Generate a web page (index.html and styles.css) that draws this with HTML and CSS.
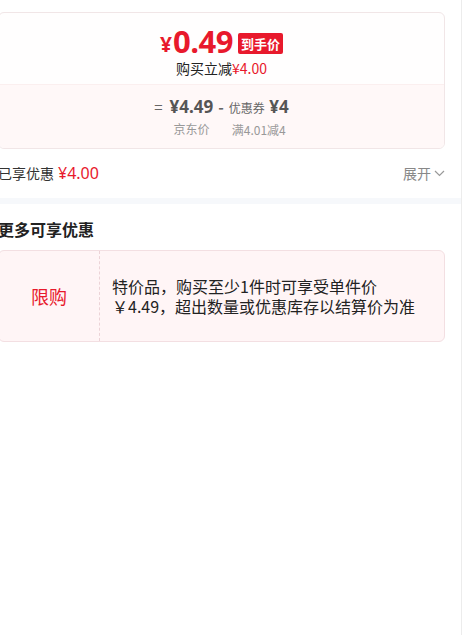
FILE: index.html
```html
<!DOCTYPE html>
<html lang="zh-CN">
<head>
<meta charset="utf-8">
<link rel="stylesheet" href="styles.css">
</head>
<body>
<div class="page">
  <div class="price-card">
    <div class="price-top">
      <div class="price-line">
        <span class="yen">¥</span><span class="amount">0.49</span><span class="badge">到手价</span>
      </div>
      <div class="reduce">购买立减<span class="red">¥4.00</span></div>
    </div>
    <div class="price-bottom">
      <div class="op">=</div>
      <div class="col">
        <div class="val">¥4.49</div>
        <div class="lbl">京东价</div>
      </div>
      <div class="op minus">-</div>
      <div class="col">
        <div class="val"><span class="small">优惠券</span> ¥4</div>
        <div class="lbl">满4.01减4</div>
      </div>
    </div>
  </div>

  <div class="saved-row">
    <div class="saved">已享优惠 <span class="saved-num">¥4.00</span></div>
    <div class="expand">展开
      <svg class="chev" width="11" height="7" viewBox="0 0 11 7"><path d="M1 1 L5.5 5.5 L10 1" fill="none" stroke="#999" stroke-width="1.2"/></svg>
    </div>
  </div>

  <div class="band"></div>

  <div class="more-title">更多可享优惠</div>

  <div class="promo-card">
    <div class="promo-tag">限购</div>
    <div class="promo-text">特价品，购买至少1件时可享受单件价￥4.49，超出数量或优惠库存以结算价为准</div>
  </div>
</div>
</body>
</html>
```
FILE: styles.css
```css
* { box-sizing: border-box; }
html, body { margin: 0; padding: 0; background: #fff; }
body {
  font-family: "Noto Sans CJK SC", "Noto Sans", sans-serif;
  color: #333;
  overflow: hidden;
}
.page {
  width: 480px;
  margin-left: -18px;
  padding: 12px 16px 0 16px;
  border-right: 1px solid #ececec;
  min-height: 635px;
}
.price-card {
  border: 1px solid #f1e6e7;
  border-radius: 6px;
  overflow: hidden;
  background: #fffefe;
}
.price-top {
  height: 71px;
  padding-top: 10px;
  display: flex;
  flex-direction: column;
  align-items: center;
}
.price-line {
  display: flex;
  align-items: center;
  height: 36px;
  line-height: 36px;
  color: #e8192c;
}
.yen {
  font-family: "Open Sans", sans-serif;
  font-weight: 700;
  font-size: 21px;
  line-height: 24px;
  margin-top: 6px;
  margin-right: 1px;
}
.amount {
  font-family: "Open Sans", sans-serif;
  font-weight: 700;
  font-size: 31px;
  line-height: 36px;
  letter-spacing: -0.5px;
}
.badge {
  background: #e8192c;
  color: #fff;
  font-size: 13px;
  font-weight: 700;
  line-height: 21px;
  padding: 0 3px;
  border-radius: 2px;
  margin-left: 5px;
  margin-top: 4px;
}
.reduce {
  font-size: 14px;
  line-height: 18px;
  color: #222;
}
.red { color: #e8192c; }
.price-bottom {
  height: 64px;
  background: #fff8f8;
  border-top: 1px solid #fbefef;
  display: flex;
  justify-content: center;
  align-items: flex-start;
  padding-top: 11px;
  color: #555;
}
.op {
  font-size: 15px;
  line-height: 22px;
  margin-right: 7px;
  margin-left: 0;
  color: #666;
}
.op.minus { margin: 0 5px 0 5px; font-weight: 700; }
.col {
  display: flex;
  flex-direction: column;
  align-items: center;
}
.val {
  font-family: "Noto Sans", "Noto Sans CJK SC", sans-serif;
  font-weight: 700;
  font-size: 17px;
  line-height: 22px;
  color: #555;
}
.small {
  font-family: "Noto Sans CJK SC", sans-serif;
  font-weight: 400;
  font-size: 12px;
  color: #666;
}
.lbl {
  font-size: 12px;
  line-height: 18px;
  margin-top: 2px;
  color: #999;
}
.saved-row {
  height: 49px;
  display: flex;
  align-items: center;
  justify-content: space-between;
  padding-bottom: 1px;
}
.saved {
  font-size: 14px;
  color: #333;
  display: flex;
  align-items: center;
}
.saved-num {
  font-family: "Noto Sans", sans-serif;
  font-size: 16px;
  color: #e8192c;
  margin-left: 4px;
}
.expand {
  font-size: 14px;
  color: #888;
  display: flex;
  align-items: center;
}
.chev { margin-left: 3px; }
.band {
  height: 6px;
  margin: 0 -16px;
  background: #f6f8fb;
}
.more-title {
  height: 46px;
  padding-top: 4px;
  display: flex;
  align-items: center;
  font-size: 16px;
  font-weight: 700;
  color: #222;
}
.promo-card {
  height: 92px;
  border: 1px solid #f3dfe2;
  border-radius: 6px;
  background: #fff5f6;
  display: flex;
  align-items: stretch;
}
.promo-tag {
  width: 101px;
  flex: none;
  border-right: 1px dashed #ecd3d7;
  display: flex;
  align-items: center;
  justify-content: center;
  font-size: 18px;
  color: #e8192c;
}
.promo-text {
  flex: 1;
  display: flex;
  align-items: center;
  padding: 0 16px 0 12px;
  font-size: 16px;
  line-height: 20px;
  color: #222;
}
```
